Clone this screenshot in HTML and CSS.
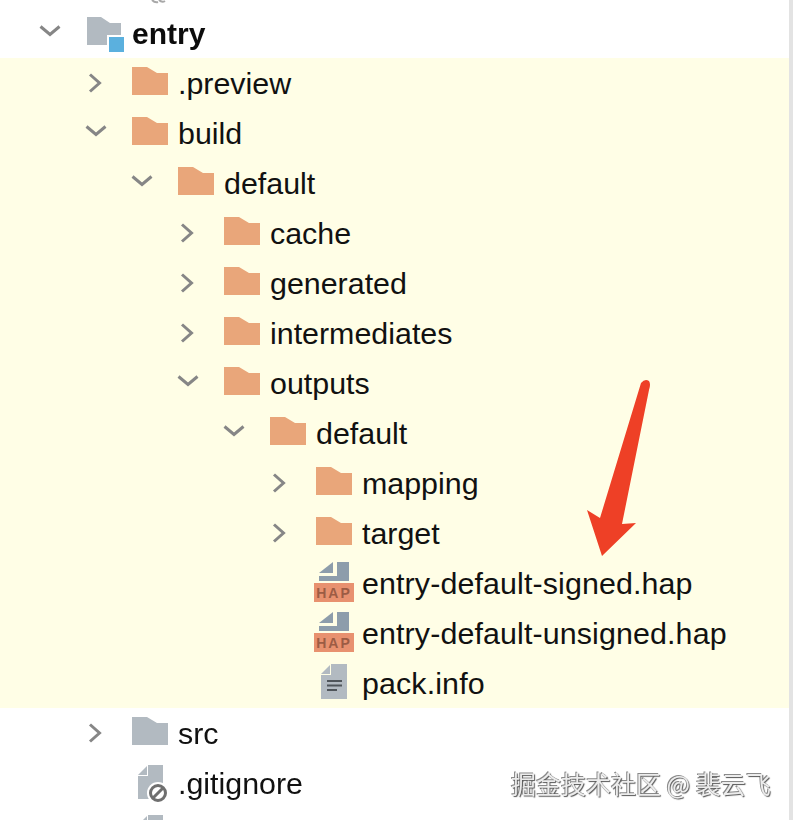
FILE: index.html
```html
<!DOCTYPE html>
<html lang="en">
<head>
<meta charset="utf-8">
<title>Project tree</title>
<link rel="stylesheet" href="styles.css">
</head>
<body>
<svg class="defs" width="0" height="0" aria-hidden="true">
  <defs>
    <symbol id="chev-right" viewBox="0 0 24 24"><polyline points="6,2.5 15.5,11 6,19.5"/></symbol>
    <symbol id="chev-down" viewBox="0 0 24 24"><polyline points="2.5,4.5 12,12.5 21.5,4.5"/></symbol>
    <symbol id="folder" viewBox="0 0 36 50" overflow="visible"><path d="M0 8H15L25 14H36V36H0Z"/></symbol>
  </defs>
</svg>
<main class="screen">
  <div class="tree">
    <div class="row d1"><span class="slot"></span><svg class="icon" viewBox="0 0 36 50"><path class="clipped" d="M20 41q3 3 6 2M27 41q3 3 6 1"/></svg></div>
    <div class="row d0 root"><svg class="arrow"><use href="#chev-down"/></svg>
      <svg class="icon" viewBox="0 0 36 50"><path class="grey" d="M1 8H15L24 14H35V36H1Z"/><rect class="halo" x="21" y="26" width="17" height="17"/><rect class="blue" x="23" y="28" width="15" height="15"/></svg>
      <span class="label">entry</span></div>
    <div class="generated">
      <div class="row d1"><svg class="arrow"><use href="#chev-right"/></svg><svg class="icon orange"><use href="#folder"/></svg><span class="label">.preview</span></div>
      <div class="row d1 open"><svg class="arrow"><use href="#chev-down"/></svg><svg class="icon orange"><use href="#folder"/></svg><span class="label">build</span></div>
      <div class="row d2 open"><svg class="arrow"><use href="#chev-down"/></svg><svg class="icon orange"><use href="#folder"/></svg><span class="label">default</span></div>
      <div class="row d3"><svg class="arrow"><use href="#chev-right"/></svg><svg class="icon orange"><use href="#folder"/></svg><span class="label">cache</span></div>
      <div class="row d3"><svg class="arrow"><use href="#chev-right"/></svg><svg class="icon orange"><use href="#folder"/></svg><span class="label">generated</span></div>
      <div class="row d3"><svg class="arrow"><use href="#chev-right"/></svg><svg class="icon orange"><use href="#folder"/></svg><span class="label">intermediates</span></div>
      <div class="row d3 open"><svg class="arrow"><use href="#chev-down"/></svg><svg class="icon orange"><use href="#folder"/></svg><span class="label">outputs</span></div>
      <div class="row d4 open"><svg class="arrow"><use href="#chev-down"/></svg><svg class="icon orange"><use href="#folder"/></svg><span class="label">default</span></div>
      <div class="row d5"><svg class="arrow"><use href="#chev-right"/></svg><svg class="icon orange"><use href="#folder"/></svg><span class="label">mapping</span></div>
      <div class="row d5"><svg class="arrow"><use href="#chev-right"/></svg><svg class="icon orange"><use href="#folder"/></svg><span class="label">target</span></div>
      <div class="row d5"><span class="slot"></span>
        <svg class="icon" viewBox="0 0 36 50"><path class="slate" d="M21 3H33V22H3V17H21Z"/><path class="slate" d="M17 3V14H3Z"/><rect class="hap-bg" x="-2" y="24" width="40" height="19"/><text class="hap-text" x="18" y="39" text-anchor="middle">HAP</text></svg>
        <span class="label file-name">entry-default-signed.hap</span></div>
      <div class="row d5"><span class="slot"></span>
        <svg class="icon" viewBox="0 0 36 50"><path class="slate" d="M21 3H33V22H3V17H21Z"/><path class="slate" d="M17 3V14H3Z"/><rect class="hap-bg" x="-2" y="24" width="40" height="19"/><text class="hap-text" x="18" y="39" text-anchor="middle">HAP</text></svg>
        <span class="label file-name">entry-default-unsigned.hap</span></div>
      <div class="row d5"><span class="slot"></span>
        <svg class="icon" viewBox="0 0 36 50"><path class="grey" d="M15 5H31V40H5V16H15Z"/><path class="grey" d="M14 6V15H5Z"/><path class="doc-lines" d="M11 22H26M11 26.5H26M11 31H21"/></svg>
        <span class="label file-name">pack.info</span></div>
    </div>
    <div class="row d1"><svg class="arrow"><use href="#chev-right"/></svg><svg class="icon greyfill"><use href="#folder"/></svg><span class="label">src</span></div>
    <div class="row d1"><span class="slot"></span>
      <svg class="icon" viewBox="0 0 36 50"><path class="grey" d="M16 6H31V40H6V17H16Z"/><path class="grey" d="M15 7V16H6Z"/><circle class="ban-halo" cx="26" cy="34" r="11"/><circle class="ban" cx="26" cy="34" r="7.5"/><path class="ban" d="M21 39L31 29"/></svg>
      <span class="label">.gitignore</span></div>
    <div class="row d1"><span class="slot"></span>
      <svg class="icon" viewBox="0 0 36 50"><path class="grey" d="M16 6H31V40H6V17H16Z"/><path class="grey" d="M15 7V16H6Z"/></svg></div>
  </div>
  <svg class="pointer" viewBox="0 0 794 820" aria-hidden="true"><path d="M641 383Q645 378 649 381Q651 384 649 390L622 524L636 523L602 556L587 510L600 518Z"/></svg>
  <div class="mark">掘金技术社区 @ 裴云飞</div>
</main>
</body>
</html>
```

FILE: styles.css
```css
* { box-sizing: border-box; }
html, body { margin: 0; padding: 0; background: #fff; }
.defs { position: absolute; }
.screen {
  position: relative;
  width: 794px;
  height: 820px;
  overflow: hidden;
  background: #fff;
  font-family: "Liberation Sans", Arial, sans-serif;
}
.tree {
  width: 793px;
  height: 861px;
  margin-top: -41px;
  border-right: 4px solid #e3e3e3;
  filter: blur(0.4px);
}
.generated {
  height: 650px;
  margin: -1px 0 1px;
  padding-top: 1px;
  background: #fffee6;
}
.row {
  display: flex;
  align-items: center;
  height: 50px;
  font-size: 30.4px;
  color: #111;
  white-space: nowrap;
}
.d0 { padding-left: 38px; }
.d1 { padding-left: 84px; }
.d2 { padding-left: 130px; }
.d3 { padding-left: 176px; }
.d4 { padding-left: 222px; }
.d5 { padding-left: 268px; }
.arrow, .slot {
  flex: none;
  width: 24px;
  height: 24px;
  margin-right: 24px;
  fill: none;
  stroke: #868686;
  stroke-width: 3;
}
.icon {
  flex: none;
  width: 36px;
  height: 50px;
  margin-right: 10px;
  overflow: visible;
}
.label { position: relative; top: -0.5px; }
.file-name { letter-spacing: 0.12px; }
.root .label { font-size: 30px; font-weight: 700; color: #0c0c0c; }
.orange { fill: #e9a67a; }
.greyfill { fill: #b2bac1; }
.grey { fill: #b2bac1; }
.halo { fill: #fff; }
.blue { fill: #5bb0de; }
.slate { fill: #8d9dab; }
.hap-bg { fill: #e8916f; }
.hap-text {
  font-family: "Liberation Sans", Arial, sans-serif;
  font-size: 14px;
  font-weight: 700;
  letter-spacing: 2px;
  fill: #9c5c44;
}
.doc-lines { fill: none; stroke: #4f555a; stroke-width: 2; }
.ban-halo { fill: #fff; }
.ban { fill: none; stroke: #6f6f6f; stroke-width: 3; }
.clipped { fill: none; stroke: #a8a8a8; stroke-width: 2; }
.pointer {
  position: absolute;
  inset: 0;
  width: 794px;
  height: 820px;
  fill: #ee4026;
}
.mark {
  position: absolute;
  left: 511px;
  top: 765px;
  font-family: "Noto Sans CJK SC", "Liberation Sans", sans-serif;
  font-size: 25px;
  line-height: 36px;
  color: #ececec;
  white-space: nowrap;
  text-shadow: 1px 1px 1px #555, -1px -1px 0 #8a8a8a;
}
```
